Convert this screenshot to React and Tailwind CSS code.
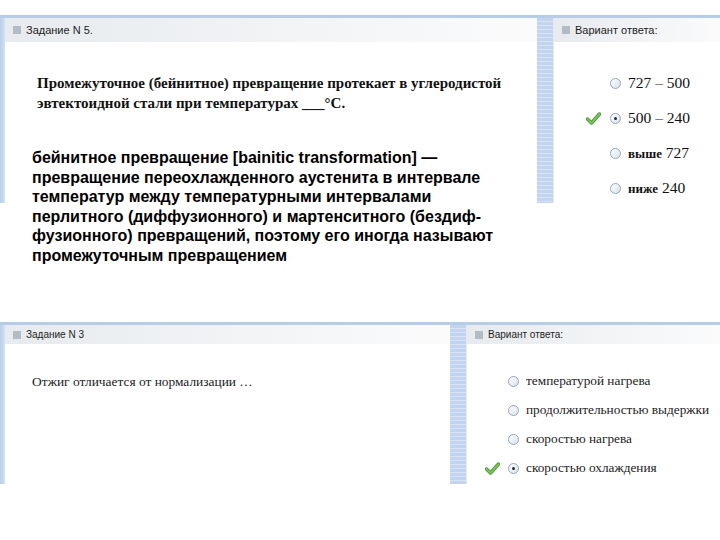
import React from 'react';

const serif = { fontFamily: '"Liberation Serif", "Times New Roman", serif' };
const sans = { fontFamily: '"Liberation Sans", Arial, sans-serif' };

function Radio({ checked }) {
  return (
    <span className="flex h-[11px] w-[11px] shrink-0 items-center justify-center rounded-full border border-[#93a6bb] bg-linear-to-br from-white to-[#d9e2ec]">
      {checked && <span className="h-[3px] w-[3px] rounded-full bg-[#2b2b2b]" />}
    </span>
  );
}

function Check() {
  return (
    <svg width="15" height="13" viewBox="0 0 15 13">
      <path d="M1.5 7 L5.5 11 L13.5 2" fill="none" stroke="#3f8a2a" strokeWidth="3.4" strokeLinecap="round" strokeLinejoin="round" />
      <path d="M1.5 7 L5.5 11 L13.5 2" fill="none" stroke="#7cc45a" strokeWidth="2" strokeLinecap="round" strokeLinejoin="round" />
    </svg>
  );
}

function Header({ children, h, size }) {
  return (
    <div className={`flex items-center gap-[5px] bg-linear-to-r from-[#e7eaee] via-[#f1f3f5] to-[#fbfbfc] pl-[8px] ${h}`}>
      <span className="h-[8px] w-[8px] bg-[#b3bbc4]" />
      <span className={`${size} text-[#1d1d1d]`} style={sans}>{children}</span>
    </div>
  );
}

const Strip = ({ w }) => (
  <div className={`${w} shrink-0 bg-[repeating-linear-gradient(180deg,#c3d5ee_0px,#c3d5ee_3px,#d8e4f4_3px,#d8e4f4_4px)]`} />
);

const topOptions = [
  { label: <>727 – 500</> },
  { label: <>500 – 240</>, checked: true },
  { label: <><b className="text-[13px]">выше</b> 727</> },
  { label: <><b className="text-[13px]">ниже</b> 240</> },
];

const bottomOptions = [
  { label: 'температурой нагрева' },
  { label: 'продолжительностью выдержки' },
  { label: 'скоростью нагрева' },
  { label: 'скоростью охлаждения', checked: true },
];

export default function App() {
  return (
    <div className="h-[540px] w-[720px] overflow-hidden bg-white">
      {/* first screenshot */}
      <div className="mt-[15px] flex h-[188px] border-t-[3px] border-[#b7cce6]">
        <div className="w-[5px] shrink-0 bg-linear-to-r from-[#b9cfea] to-[#d4e1f2]" />
        <div className="w-[532px] shrink-0 bg-white">
          <Header h="h-[24px]" size="text-[11px]">Задание N 5.</Header>
          <p className="mt-[31px] pl-[32px] text-[15px] font-bold leading-[20px] text-[#111]" style={serif}>
            Промежуточное (бейнитное) превращение протекает в углеродистой<br />
            эвтектоидной стали при температурах ___°С.
          </p>
          <p className="relative mt-[35px] pl-[27px] text-[16px] font-bold leading-[19.5px] text-black" style={sans}>
            бейнитное превращение [bainitic transformation] —<br />
            превращение переохлажденного аустенита в интервале<br />
            температур между температурными интервалами<br />
            перлитного (диффузионного) и мартенситного (бездиф-<br />
            фузионного) превращений, поэтому его иногда называют<br />
            промежуточным превращением
          </p>
        </div>
        <Strip w="w-[16px]" />
        <div className="flex-1 border-l border-[#e4e8ee] bg-white">
          <Header h="h-[24px]" size="text-[11px]">Вариант ответа:</Header>
          <div className="mt-[31px] flex flex-col gap-[15px]">
            {topOptions.map((o, i) => (
              <div key={i} className="flex h-[20px] items-center">
                <div className="flex w-[56px] justify-end pr-[9px]">{o.checked && <Check />}</div>
                <Radio checked={o.checked} />
                <span className="ml-[7px] text-[15.5px] text-[#111]" style={serif}>{o.label}</span>
              </div>
            ))}
          </div>
        </div>
      </div>

      {/* second screenshot */}
      <div className="mt-[119px] flex h-[162px] border-t-[3px] border-[#b7cce6]">
        <div className="w-[5px] shrink-0 bg-linear-to-r from-[#b9cfea] to-[#d4e1f2]" />
        <div className="w-[445px] shrink-0 bg-white">
          <Header h="h-[19px]" size="text-[10px]">Задание N 3</Header>
          <p className="mt-[29px] pl-[27px] text-[13.4px] leading-[18px] text-[#222]" style={serif}>
            Отжиг отличается от нормализации …
          </p>
        </div>
        <Strip w="w-[16px]" />
        <div className="flex-1 border-l border-[#e4e8ee] bg-white">
          <Header h="h-[19px]" size="text-[10px]">Вариант ответа:</Header>
          <div className="mt-[28px] flex flex-col gap-[11px]">
            {bottomOptions.map((o, i) => (
              <div key={i} className="flex h-[18px] items-center">
                <div className="flex w-[41px] justify-end pr-[8px]">{o.checked && <Check />}</div>
                <Radio checked={o.checked} />
                <span className="ml-[7px] text-[13.3px] text-[#222]" style={serif}>{o.label}</span>
              </div>
            ))}
          </div>
        </div>
      </div>
    </div>
  );
}
